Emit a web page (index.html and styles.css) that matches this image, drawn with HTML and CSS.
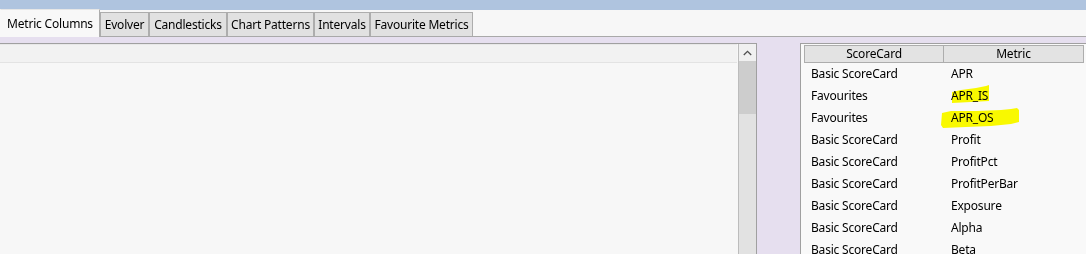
FILE: index.html
```html
<!DOCTYPE html>
<html>
<head>
<meta charset="utf-8">
<link rel="stylesheet" href="styles.css">
</head>
<body>
<div class="topbar"></div>
<div class="tabstrip">
  <div class="tab selected w99">Metric Columns</div>
  <div class="tab w49">Evolver</div>
  <div class="tab w78">Candlesticks</div>
  <div class="tab w87">Chart Patterns</div>
  <div class="tab w56">Intervals</div>
  <div class="tab w103">Favourite Metrics</div>
</div>
<div class="workarea">
  <div class="leftpanel">
    <div class="listview">
      <div class="lv-header"></div>
      <div class="lv-body"></div>
    </div>
    <div class="scrollbar">
      <div class="sb-btn">
        <svg width="9" height="6" viewBox="0 0 9 6"><polyline points="0.8,5 4.5,1.3 8.2,5" fill="none" stroke="#505050" stroke-width="1.3"/></svg>
      </div>
      <div class="sb-thumb"></div>
      <div class="sb-track"></div>
    </div>
  </div>
  <div class="gap"></div>
  <div class="rightpanel">
    <div class="grid">
      <div class="gh">ScoreCard</div>
      <div class="gh">Metric</div>
      <div class="gc">Basic ScoreCard</div><div class="gc">APR</div>
      <div class="gc">Favourites</div><div class="gc">APR_IS</div>
      <div class="gc">Favourites</div><div class="gc">APR_OS</div>
      <div class="gc">Basic ScoreCard</div><div class="gc">Profit</div>
      <div class="gc">Basic ScoreCard</div><div class="gc">ProfitPct</div>
      <div class="gc">Basic ScoreCard</div><div class="gc">ProfitPerBar</div>
      <div class="gc">Basic ScoreCard</div><div class="gc">Exposure</div>
      <div class="gc">Basic ScoreCard</div><div class="gc">Alpha</div>
      <div class="gc">Basic ScoreCard</div><div class="gc">Beta</div>
    </div>
    <svg class="marks" width="300" height="220" viewBox="0 0 300 220">
      <polygon fill="#ffff00" points="151,48 160,46 175,44 185,42 188,41 188,57 170,58 151,59"/>
      <polygon fill="#ffff00" points="141,69 150,67 175,67 200,66 210,65 216,64 218,66 218,78 210,80 190,82 165,83 142,84 140,81"/>
    </svg>
  </div>
</div>
</body>
</html>
```

FILE: styles.css
```css
html, body {
  margin: 0;
  padding: 0;
}
body {
  width: 1086px;
  height: 254px;
  overflow: hidden;
  background: #e6dfef;
  font-family: "Noto Sans", "Open Sans", sans-serif;
  font-size: 12px;
  letter-spacing: -0.2px;
  color: #000;
}
.topbar {
  height: 10px;
  background: #afc4df;
}
.tabstrip {
  height: 26px;
  background: #f7f7f7;
  border-bottom: 1px solid #a9a9a9;
  display: flex;
  align-items: flex-end;
}
.tab {
  box-sizing: border-box;
  height: 24px;
  background: #e1e1e1;
  border: 1px solid #adadad;
  border-bottom: none;
  display: flex;
  align-items: center;
  justify-content: center;
  white-space: nowrap;
}
.tab.selected {
  height: 28px;
  margin-bottom: -1px;
  background: #f8f8f8;
  border-color: #e6e6e6 #adadad transparent transparent;
  padding-bottom: 1px;
}
.w99 { width: 100px; }
.w49 { width: 49px; }
.w78 { width: 78px; }
.w87 { width: 87px; }
.w56 { width: 56px; }
.w103 { width: 103px; }

.workarea {
  margin-top: 6px;
  display: flex;
  height: 211px;
}
.leftpanel {
  width: 756px;
  border-top: 1px solid #a0a0a0;
  border-right: 1px solid #a0a0a0;
  background: #f7f7f7;
  display: flex;
}
.listview {
  flex: 1;
  display: flex;
  flex-direction: column;
}
.lv-header {
  height: 17px;
  width: 737px;
  background: #f2f2f2;
  border-top: 1px solid #e8e8e8;
  border-bottom: 1px solid #e3e3e3;
}
.lv-body {
  flex: 1;
}
.scrollbar {
  width: 17px;
  border-left: 1px solid #bcbcbc;
  display: flex;
  flex-direction: column;
  background: #e2e2e2;
}
.sb-btn {
  height: 17px;
  background: #f0f0f0;
  display: flex;
  align-items: center;
  justify-content: center;
}
.sb-thumb {
  height: 53px;
  background: #cdcdcd;
}
.sb-track {
  flex: 1;
  background: #e2e2e2;
}
.gap {
  width: 43px;
}
.rightpanel {
  position: relative;
  flex: 1;
  border-top: 1px solid #a0a0a0;
  border-left: 1px solid #a0a0a0;
  background: #f9f9f9;
  padding: 1px 0 0 3px;
}
.grid {
  display: grid;
  grid-template-columns: 140px 140px;
  grid-template-rows: 18px;
  grid-auto-rows: 22px;
}
.gh {
  box-sizing: border-box;
  height: 18px;
  background: #e3e3e3;
  border: 1px solid #adadad;
  display: flex;
  align-items: center;
  justify-content: center;
  padding-bottom: 1px;
}
.gh + .gh {
  border-left: none;
}
.gc {
  position: relative;
  z-index: 1;
  display: flex;
  align-items: center;
  padding-left: 7px;
  padding-bottom: 2px;
  white-space: nowrap;
}
.marks {
  position: absolute;
  left: 0;
  top: 0;
  mix-blend-mode: multiply;
  z-index: 2;
  pointer-events: none;
}
```
